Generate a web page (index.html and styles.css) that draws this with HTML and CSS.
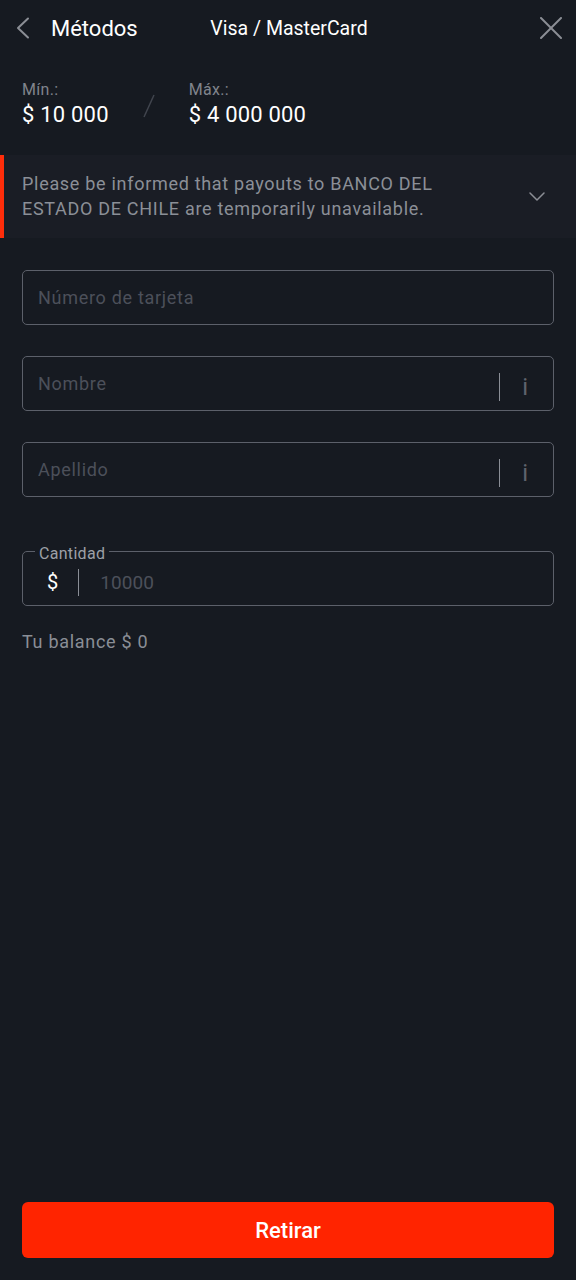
FILE: index.html
```html
<!DOCTYPE html>
<html lang="es">
<head>
    <meta charset="UTF-8">
    <meta name="viewport" content="width=device-width, initial-scale=1.0">
    <title>Visa / MasterCard</title>
    <link rel="stylesheet" href="styles.css">
</head>
<body>
    <div class="page">
        <header class="topbar">
            <div class="topbar-left">
                <svg class="back-icon" viewBox="0 0 14 22" fill="none" stroke="#8b8e95" stroke-width="2" stroke-linecap="round" stroke-linejoin="round">
                    <polyline points="12,1.5 2,11 12,20.5"/>
                </svg>
                <span class="topbar-back">Métodos</span>
            </div>
            <div class="topbar-title">Visa / MasterCard</div>
            <div class="topbar-right">
                <svg class="close-icon" viewBox="0 0 22 22" fill="none" stroke="#8b8e95" stroke-width="2" stroke-linecap="round">
                    <line x1="1" y1="1" x2="21" y2="21"/>
                    <line x1="21" y1="1" x2="1" y2="21"/>
                </svg>
            </div>
        </header>

        <!-- withdrawal limits -->
        <section class="limits">
            <div class="limit">
                <div class="limit-label">Mín.:</div>
                <div class="limit-value">$ 10 000</div>
            </div>
            <svg class="limit-sep" viewBox="0 0 12 24" fill="none" stroke="#41454e" stroke-width="1.5">
                <line x1="11" y1="1" x2="1" y2="23"/>
            </svg>
            <div class="limit">
                <div class="limit-label">Máx.:</div>
                <div class="limit-value">$ 4 000 000</div>
            </div>
        </section>

        <div class="notice">
            <p class="notice-text">Please be informed that payouts to BANCO DEL ESTADO DE CHILE are temporarily unavailable.</p>
            <svg class="notice-toggle" viewBox="0 0 16 9" fill="none" stroke="#8b8e95" stroke-width="1.5" stroke-linecap="round" stroke-linejoin="round">
                <polyline points="1,1 8,8 15,1"/>
            </svg>
        </div>

        <form class="form">
            <label class="field">
                <input class="field-input" type="text" placeholder="Número de tarjeta">
            </label>
            <label class="field">
                <input class="field-input" type="text" placeholder="Nombre">
                <span class="field-info"><span class="field-sep"></span><span class="field-i">i</span></span>
            </label>
            <label class="field">
                <input class="field-input" type="text" placeholder="Apellido">
                <span class="field-info"><span class="field-sep"></span><span class="field-i">i</span></span>
            </label>

            <fieldset class="amount">
                <legend class="amount-legend">Cantidad</legend>
                <div class="amount-row">
                    <span class="currency">$</span>
                    <span class="amount-sep"></span>
                    <input class="field-input amount-input" type="text" placeholder="10000">
                </div>
            </fieldset>

            <p class="balance">Tu balance $ 0</p>
        </form>

        <button class="submit" type="button">Retirar</button>
    </div>
</body>
</html>
```

FILE: styles.css
```css
body {
    margin: 0;
    background-color: #161a21;
    font-family: Roboto, "Noto Sans", Arial, sans-serif;
    color: #fff;
}
.page {
    min-height: 1280px;
    box-sizing: border-box;
    display: flex;
    flex-direction: column;
    padding-bottom: 22px;
}
.topbar {
    height: 56px;
    display: grid;
    grid-template-columns: 1fr auto 1fr;
    align-items: center;
    padding: 0 14px 0 16px;
}
.topbar-left {
    display: flex;
    align-items: center;
    gap: 21px;
}
.back-icon {
    width: 14px;
    height: 22px;
}
.topbar-back {
    font-size: 22px;
}
.topbar-title {
    font-size: 19.5px;
}
.topbar-right {
    display: flex;
    justify-content: flex-end;
}
.close-icon {
    width: 22px;
    height: 22px;
}
.limits {
    display: flex;
    align-items: flex-end;
    gap: 34px;
    padding: 24px 22px 0;
}
.limit-label {
    font-size: 16px;
    line-height: 19px;
    color: #80848c;
    letter-spacing: 0.3px;
}
.limit-value {
    font-size: 22px;
    line-height: 26px;
    margin-top: 3px;
    letter-spacing: 0.2px;
}
.limit-sep {
    width: 12px;
    height: 24px;
    margin-bottom: 10px;
}
.notice {
    display: flex;
    align-items: center;
    margin-top: 27px;
    background-color: #1a1d25;
    border-left: 4px solid #ff2d0a;
    padding: 16px 31px 17px 18px;
}
.notice-text {
    flex: 1;
    max-width: 440px;
    margin: 0;
    font-size: 18px;
    line-height: 25px;
    letter-spacing: 0.7px;
    color: #8b8f97;
}
.notice-toggle {
    margin-left: auto;
    width: 16px;
    height: 9px;
}
.form {
    padding: 32px 22px 0;
}
.field {
    display: flex;
    align-items: center;
    height: 55px;
    box-sizing: border-box;
    border: 1px solid #5c606a;
    border-radius: 5px;
    padding-left: 15px;
}
.field + .field {
    margin-top: 31px;
}
.field-input {
    flex: 1;
    min-width: 0;
    background: transparent;
    border: 0;
    outline: 0;
    padding: 0;
    font-family: inherit;
    font-size: 18px;
    letter-spacing: 0.7px;
    color: #fff;
}
.field-input::placeholder {
    color: #4c505a;
}
.field-info {
    display: flex;
    align-items: center;
    margin-top: 7px;
}
.field-sep {
    width: 1px;
    height: 28px;
    background-color: #8a8e96;
}
.field-i {
    font-size: 24px;
    line-height: 28px;
    color: #5f636c;
    margin: 0 25px 0 22px;
}
.amount {
    margin: 43px 0 0;
    padding: 0 0 4px 12px;
    border: 1px solid #5c606a;
    border-radius: 5px;
    min-width: 0;
}
.amount-legend {
    padding: 4px 4px 0;
    font-size: 16px;
    line-height: 19px;
    letter-spacing: 0.3px;
    color: #9da0a7;
}
.amount-row {
    display: flex;
    align-items: center;
    height: 38px;
    padding-left: 12px;
}
.currency {
    font-size: 20px;
    color: #fff;
}
.amount-sep {
    width: 1px;
    height: 27px;
    background-color: #8a8e96;
    margin: 0 21px 0 20px;
}
.amount-input {
    font-size: 19px;
    letter-spacing: 0.1px;
}
.balance {
    margin: 25px 0 0;
    font-size: 18px;
    line-height: 21px;
    letter-spacing: 0.7px;
    color: #8a8e96;
}
.submit {
    margin: auto 22px 0;
    height: 56px;
    border: 0;
    border-radius: 6px;
    background-color: #ff2400;
    color: #fff;
    font-family: inherit;
    font-size: 22px;
    font-weight: 500;
}
```
